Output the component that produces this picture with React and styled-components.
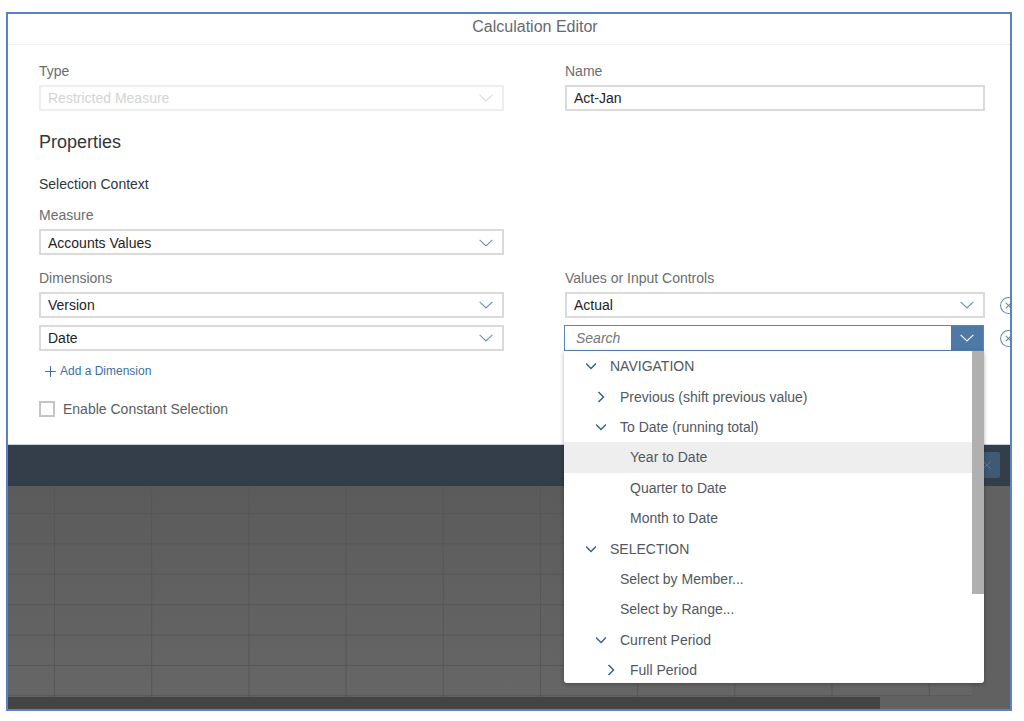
import React from 'react';
import styled, { createGlobalStyle } from 'styled-components';
import { CircleX, Plus, X } from 'lucide-react';

const GlobalStyle = createGlobalStyle`
  html, body {
    margin: 0;
    padding: 0;
    background: #fff;
  }
  body {
    font-family: "Liberation Sans", Arial, sans-serif;
    font-size: 14px;
  }
  * {
    box-sizing: border-box;
  }
`;

const Page = styled.div`
  padding: 12px 0 0 6px;
`;

const Frame = styled.div`
  width: 1006px;
  height: 699px;
  border: 2px solid #5b82c8;
  display: flex;
  flex-direction: column;
  overflow: hidden;
  background: #fff;
`;

const Header = styled.header`
  height: 31px;
  flex: none;
  display: flex;
  align-items: center;
  justify-content: center;
  padding: 0 0 5px 52px;
  border-bottom: 1px solid #eeeeee;
  font-size: 16px;
  color: #666a6e;
`;

const Form = styled.section`
  height: 400px;
  flex: none;
  padding: 18px 0 0 31px;
  border-bottom: 1px solid #c8d0dc;
`;

const Columns = styled.div`
  display: grid;
  grid-template-columns: 465px 420px;
  column-gap: 61px;
  margin-top: ${(p) => p.$top || 0}px;
`;

const Label = styled.label`
  display: block;
  height: 16px;
  line-height: 16px;
  margin-bottom: 6px;
  color: #6a6d70;
`;

const Heading = styled.h2`
  margin: 20px 0 0;
  height: 22px;
  line-height: 22px;
  font-size: 18px;
  font-weight: 400;
  color: #32363a;
`;

const SubHeading = styled.h3`
  margin: 23px 0 0;
  height: 16px;
  line-height: 16px;
  font-size: 14px;
  font-weight: 400;
  color: #32363a;
`;

const Narrow = styled.div`
  width: 465px;
  margin-top: 15px;
`;

const Stack = styled.div`
  display: flex;
  flex-direction: column;
  gap: 7px;
`;

const Control = styled.div`
  height: 26px;
  display: flex;
  align-items: center;
  justify-content: space-between;
  padding: ${(p) => (p.$low ? 1 : 0)}px 9px 0 7px;
  background: #fff;
  border: 2px solid ${(p) => (p.$disabled ? '#eeeeee' : '#dadada')};
  color: ${(p) => (p.$disabled ? '#d2d4d6' : '#1f2226')};
`;

const Chevron = ({ color = '#6b90b5', width = 14, stroke = 1.1 }) => (
  <svg width={width} height={width * 0.55} viewBox="0 0 14 7.7" fill="none">
    <path d="M0.6 0.8 L7 7 L13.4 0.8" stroke={color} strokeWidth={stroke * (14 / width)} />
  </svg>
);

const TreeArrow = ({ open }) => (
  <svg width="10" height="12" viewBox="0 0 10 12" fill="none">
    <path
      d={open ? 'M0 3.5 L5 8.5 L10 3.5' : 'M2.5 1 L7.5 6 L2.5 11'}
      stroke="#34628f"
      strokeWidth="1.5"
    />
  </svg>
);

const ValueRow = styled.div`
  position: relative;
  display: flex;
  align-items: center;
`;

const ValueControl = styled(Control)`
  width: 420px;
  flex: none;
`;

const RemoveIcon = styled(CircleX)`
  flex: none;
  margin-left: ${(p) => p.$gap}px;
  color: #5f88b0;
`;

const SearchBox = styled.div`
  width: 420px;
  height: 26px;
  flex: none;
  margin-left: -1px;
  display: flex;
  border: 1px solid #5a87b2;
  background: #fff;
`;

const SearchText = styled.span`
  flex: 1;
  padding-left: 11px;
  line-height: 24px;
  font-style: italic;
  color: #74777a;
`;

const SearchButton = styled.span`
  width: 32px;
  display: flex;
  align-items: center;
  justify-content: center;
  background: #4d79a6;
`;

const AddLink = styled.a`
  display: flex;
  align-items: center;
  gap: 1px;
  height: 16px;
  margin: 12px 0 0 3px;
  font-size: 12px;
  color: #3f6f9f;
`;

const CheckRow = styled.div`
  display: flex;
  align-items: center;
  gap: 8px;
  margin-top: 22px;
  color: #5a5e62;
`;

const CheckBox = styled.span`
  width: 16px;
  height: 16px;
  background: #fff;
  border: 2px solid #c4c4c4;
`;

const Toolbar = styled.div`
  height: 41px;
  flex: none;
  display: flex;
  align-items: center;
  justify-content: flex-end;
  padding: 0 10px 2px 0;
  background: #333e4a;
`;

const ToolButton = styled.span`
  width: 40px;
  height: 26px;
  display: flex;
  align-items: center;
  justify-content: flex-end;
  padding-right: 6px;
  border-radius: 2px;
  background: #3f5a72;
  color: #5d7c94;
`;

const SheetArea = styled.div`
  flex: 1;
  display: flex;
  flex-direction: column;
  background: #616161;
`;

const SheetBody = styled.div`
  flex: 1;
  display: flex;
`;

const Sheet = styled.div`
  width: 964px;
  background-color: #5f5f5f;
  background-image:
    linear-gradient(to right, #565656 1px, transparent 1px),
    linear-gradient(to bottom, #565656 1px, transparent 1px),
    linear-gradient(to bottom, #5b5b5b, #666666);
  background-size: 97.2px 100%, 100% 30.4px, 100% 100%;
  background-position: 46px 0, 0 27px, 0 0;
`;

const ScrollTrack = styled.div`
  height: 12px;
  flex: none;
  background: #616161;
`;

const ScrollThumb = styled.div`
  width: 872px;
  height: 100%;
  background: #444444;
`;

const Dropdown = styled.div`
  position: absolute;
  top: 26px;
  left: -1px;
  width: 420px;
  height: 332px;
  display: flex;
  background: #fff;
  border-radius: 0 0 3px 3px;
  box-shadow: 0 1px 4px rgba(0, 0, 0, 0.3);
  overflow: hidden;
  z-index: 2;
`;

const Tree = styled.ul`
  flex: 1;
  margin: 0;
  padding: 0;
  list-style: none;
`;

const TreeRow = styled.li`
  height: 30.4px;
  display: flex;
  align-items: center;
  padding-left: ${(p) => 22 + p.$level * 10}px;
  background: ${(p) => (p.$active ? '#eeeeee' : 'transparent')};
  color: #51585f;
`;

const ArrowSlot = styled.span`
  width: 24px;
  flex: none;
  display: flex;
`;

const DropScroll = styled.div`
  width: 12px;
  flex: none;
`;

const DropThumb = styled.div`
  height: 243px;
  background: #b0b0b0;
`;

const treeItems = [
  { text: 'NAVIGATION', level: 0, arrow: 'open' },
  { text: 'Previous (shift previous value)', level: 1, arrow: 'closed' },
  { text: 'To Date (running total)', level: 1, arrow: 'open' },
  { text: 'Year to Date', level: 2, active: true },
  { text: 'Quarter to Date', level: 2 },
  { text: 'Month to Date', level: 2 },
  { text: 'SELECTION', level: 0, arrow: 'open' },
  { text: 'Select by Member...', level: 1 },
  { text: 'Select by Range...', level: 1 },
  { text: 'Current Period', level: 1, arrow: 'open' },
  { text: 'Full Period', level: 2, arrow: 'closed' },
];

const App = () => {
  return (
    <Page>
      <GlobalStyle />
      <Frame>
        <Header>Calculation Editor</Header>
        <Form>
          <Columns>
            <div>
              <Label>Type</Label>
              <Control $disabled>
                Restricted Measure
                <Chevron color="#d4dce4" />
              </Control>
            </div>
            <div>
              <Label>Name</Label>
              <Control>Act-Jan</Control>
            </div>
          </Columns>

          <Heading>Properties</Heading>
          <SubHeading>Selection Context</SubHeading>

          <Narrow>
            <Label>Measure</Label>
            <Control $low>
              Accounts Values
              <Chevron />
            </Control>
          </Narrow>

          <Columns $top={15}>
            <div>
              <Label>Dimensions</Label>
              <Stack>
                <Control>
                  Version
                  <Chevron />
                </Control>
                <Control>
                  Date
                  <Chevron />
                </Control>
              </Stack>
            </div>
            <div>
              <Label>Values or Input Controls</Label>
              <Stack>
                <ValueRow>
                  <ValueControl>
                    Actual
                    <Chevron />
                  </ValueControl>
                  <RemoveIcon $gap={14} size={19} strokeWidth={1.3} />
                </ValueRow>
                <ValueRow>
                  <SearchBox>
                    <SearchText>Search</SearchText>
                    <SearchButton>
                      <Chevron color="#ffffff" />
                    </SearchButton>
                  </SearchBox>
                  <RemoveIcon $gap={15} size={19} strokeWidth={1.3} />
                  <Dropdown>
                    <Tree>
                      {treeItems.map((item) => (
                        <TreeRow key={item.text} $level={item.level} $active={item.active}>
                          <ArrowSlot>
                            {item.arrow && <TreeArrow open={item.arrow === 'open'} />}
                          </ArrowSlot>
                          {item.text}
                        </TreeRow>
                      ))}
                    </Tree>
                    <DropScroll>
                      <DropThumb />
                    </DropScroll>
                  </Dropdown>
                </ValueRow>
              </Stack>
            </div>
          </Columns>

          <AddLink>
            <Plus size={17} strokeWidth={1.5} />
            Add a Dimension
          </AddLink>
          <CheckRow>
            <CheckBox />
            Enable Constant Selection
          </CheckRow>
        </Form>
        <Toolbar>
          <ToolButton>
            <X size={14} strokeWidth={1.5} />
          </ToolButton>
        </Toolbar>
        <SheetArea>
          <SheetBody>
            <Sheet />
          </SheetBody>
          <ScrollTrack>
            <ScrollThumb />
          </ScrollTrack>
        </SheetArea>
      </Frame>
    </Page>
  );
};

export default App;
